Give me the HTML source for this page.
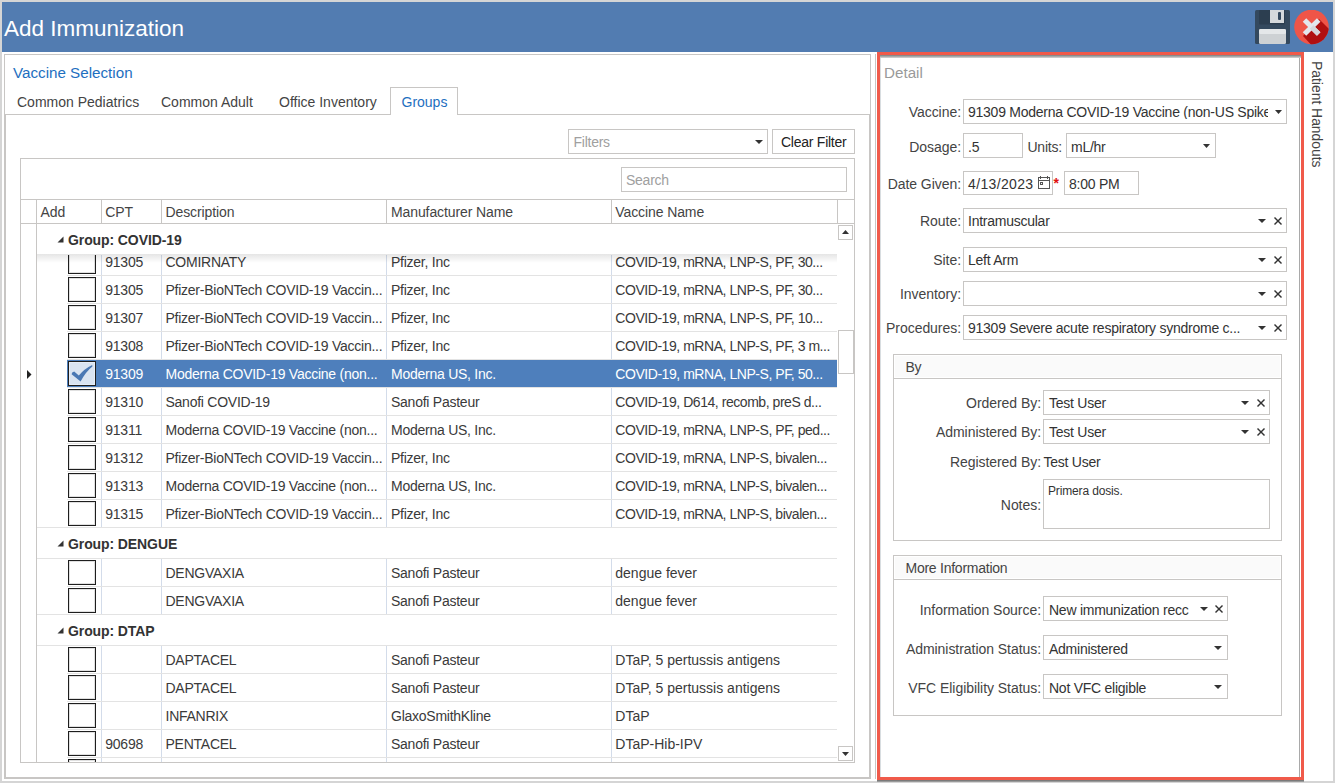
<!DOCTYPE html>
<html><head><meta charset="utf-8"><style>
html,body{margin:0;padding:0}
body{width:1335px;height:783px;position:relative;overflow:hidden;background:#fff;font-family:"Liberation Sans",sans-serif}
.t{position:absolute;white-space:nowrap;line-height:1;font-family:"Liberation Sans",sans-serif}
</style></head><body>
<div style="position:absolute;left:0px;top:0px;width:1335px;height:783px;background:#d5d5d5"></div>
<div style="position:absolute;left:2px;top:2px;width:1331px;height:779px;background:#fff"></div>
<div style="position:absolute;left:2px;top:2px;width:1331px;height:50px;background:#527cb1"></div>
<div class="t" style="left:4px;top:18.00px;font-size:22.5px;color:#fff;font-weight:400;">Add Immunization</div>
<svg style="position:absolute;left:1255px;top:10px" width="35" height="35" viewBox="0 0 35 35">
<rect x="0" y="0" width="35" height="34" rx="1.5" fill="#34495e"/>
<rect x="4" y="0" width="26" height="14.5" rx="1" fill="#2c3e50"/>
<rect x="15" y="0" width="14" height="13" fill="#d5d9dc"/>
<rect x="23" y="2" width="3" height="8" rx="1" fill="#34495e"/>
<rect x="4" y="19" width="27" height="15" rx="1.5" fill="#cdd1d4"/>
<rect x="4" y="19" width="27" height="5" rx="1.5" fill="#e4e7e9"/>
</svg>
<svg style="position:absolute;left:1294px;top:10px" width="35" height="35" viewBox="0 0 35 35">
<defs><clipPath id="cc"><circle cx="17.5" cy="17" r="17.3"/></clipPath></defs>
<circle cx="17.5" cy="17" r="17.3" fill="#ef5548"/>
<g clip-path="url(#cc)"><polygon points="25,9 40,24 40,40 22,40 9,26" fill="#b01010"/></g>
<g stroke="#e3e6ec" stroke-width="5" stroke-linecap="butt">
<line x1="10.5" y1="9.9" x2="24.7" y2="24.1"/><line x1="24.7" y1="9.9" x2="10.5" y2="24.1"/></g>
<g clip-path="url(#cc)"><line x1="17.6" y1="17" x2="24.7" y2="24.1" stroke="#d4d6da" stroke-width="5"/></g>
</svg>
<div style="position:absolute;left:4px;top:54px;width:867px;height:725px;border:1px solid #c8c6c4;box-sizing:border-box"></div>
<div class="t" style="left:13px;top:65.00px;font-size:15.2px;color:#1e6fc0;font-weight:400;">Vaccine Selection</div>
<div style="position:absolute;left:5px;top:114px;width:865px;height:664px;border:1px solid #c8c6c4;box-sizing:border-box"></div>
<div style="position:absolute;left:390px;top:87px;width:68px;height:28px;border:1px solid #c8c6c4;border-bottom:none;box-sizing:border-box;background:#fff"></div>
<div class="t" style="left:17px;top:95.00px;font-size:14px;color:#444;font-weight:400;letter-spacing:0px">Common Pediatrics</div>
<div class="t" style="left:161px;top:95.00px;font-size:14px;color:#444;font-weight:400;letter-spacing:0px">Common Adult</div>
<div class="t" style="left:279px;top:95.00px;font-size:14px;color:#444;font-weight:400;letter-spacing:0px">Office Inventory</div>
<div class="t" style="left:401.5px;top:95.00px;font-size:14px;color:#1e6fc0;font-weight:400;letter-spacing:0px">Groups</div>
<div style="position:absolute;left:568px;top:129px;width:200px;height:25px;border:1px solid #c8c6c4;box-sizing:border-box"></div>
<div class="t" style="left:573.5px;top:135.00px;font-size:14px;color:#a0a0a0;font-weight:400;letter-spacing:-0.25px;">Filters</div>
<svg style="position:absolute;left:755px;top:140px" width="8" height="4"><polygon points="0,0 8,0 4.0,4" fill="#333"/></svg>
<div style="position:absolute;left:772px;top:129px;width:83px;height:25px;border:1px solid #c8c6c4;box-sizing:border-box"></div>
<div class="t" style="left:781px;top:135.00px;font-size:14px;color:#222;font-weight:400;letter-spacing:-0.25px;">Clear Filter</div>
<div style="position:absolute;left:20px;top:158px;width:835px;height:605px;border:1px solid #c8c6c4;box-sizing:border-box"></div>
<div style="position:absolute;left:621px;top:167px;width:226px;height:25px;border:1px solid #c8c6c4;box-sizing:border-box"></div>
<div class="t" style="left:626px;top:172.50px;font-size:14px;color:#a0a0a0;font-weight:400;letter-spacing:-0.25px;">Search</div>
<div style="position:absolute;left:20px;top:199px;width:835px;height:1px;background:#c8c6c4"></div>
<div style="position:absolute;left:20px;top:223px;width:835px;height:1px;background:#c8c6c4"></div>
<div style="position:absolute;left:101px;top:199px;width:1px;height:25px;background:#c8c6c4"></div>
<div style="position:absolute;left:161px;top:199px;width:1px;height:25px;background:#c8c6c4"></div>
<div style="position:absolute;left:386px;top:199px;width:1px;height:25px;background:#c8c6c4"></div>
<div style="position:absolute;left:611px;top:199px;width:1px;height:25px;background:#c8c6c4"></div>
<div style="position:absolute;left:837px;top:199px;width:1px;height:25px;background:#c8c6c4"></div>
<div style="position:absolute;left:36px;top:199px;width:1px;height:564px;background:#c8c6c4"></div>
<div class="t" style="left:40.5px;top:205.00px;font-size:14px;color:#444;font-weight:400;letter-spacing:-0.1px">Add</div>
<div class="t" style="left:105.3px;top:205.00px;font-size:14px;color:#444;font-weight:400;letter-spacing:-0.1px">CPT</div>
<div class="t" style="left:165.5px;top:205.00px;font-size:14px;color:#444;font-weight:400;letter-spacing:-0.1px">Description</div>
<div class="t" style="left:391px;top:205.00px;font-size:14px;color:#444;font-weight:400;letter-spacing:-0.1px">Manufacturer Name</div>
<div class="t" style="left:615.3px;top:205.00px;font-size:14px;color:#444;font-weight:400;letter-spacing:-0.1px">Vaccine Name</div>
<div style="position:absolute;left:37px;top:224px;width:800px;height:538px;overflow:hidden">
<div style="position:absolute;left:-37px;top:-224px;width:1335px;height:783px">
<div style="position:absolute;left:101px;top:248px;width:1px;height:27px;background:#d3dcea"></div>
<div style="position:absolute;left:161px;top:248px;width:1px;height:27px;background:#d3dcea"></div>
<div style="position:absolute;left:386px;top:248px;width:1px;height:27px;background:#d3dcea"></div>
<div style="position:absolute;left:611px;top:248px;width:1px;height:27px;background:#d3dcea"></div>
<div style="position:absolute;left:67px;top:275px;width:771px;height:1px;background:#e3e3e3"></div>
<div style="position:absolute;left:68px;top:249px;width:28px;height:25px;border:1px solid #1e1e1e;box-shadow:inset 0 0 0 1px rgba(0,0,0,0.12);box-sizing:border-box;background:#fff"></div>
<div class="t" style="left:105.3px;top:255.00px;font-size:14px;color:#3a3a3a;font-weight:400;letter-spacing:-0.25px;">91305</div>
<div class="t" style="left:165.5px;top:255.00px;font-size:14px;color:#3a3a3a;font-weight:400;letter-spacing:-0.25px;">COMIRNATY</div>
<div class="t" style="left:391px;top:255.00px;font-size:14px;color:#3a3a3a;font-weight:400;letter-spacing:-0.25px;">Pfizer, Inc</div>
<div class="t" style="left:615.3px;top:255.00px;font-size:14px;color:#3a3a3a;font-weight:400;letter-spacing:-0.45px">COVID-19, mRNA, LNP-S, PF, 30...</div>
<div style="position:absolute;left:101px;top:276px;width:1px;height:27px;background:#d3dcea"></div>
<div style="position:absolute;left:161px;top:276px;width:1px;height:27px;background:#d3dcea"></div>
<div style="position:absolute;left:386px;top:276px;width:1px;height:27px;background:#d3dcea"></div>
<div style="position:absolute;left:611px;top:276px;width:1px;height:27px;background:#d3dcea"></div>
<div style="position:absolute;left:67px;top:303px;width:771px;height:1px;background:#e3e3e3"></div>
<div style="position:absolute;left:68px;top:277px;width:28px;height:25px;border:1px solid #1e1e1e;box-shadow:inset 0 0 0 1px rgba(0,0,0,0.12);box-sizing:border-box;background:#fff"></div>
<div class="t" style="left:105.3px;top:283.00px;font-size:14px;color:#3a3a3a;font-weight:400;letter-spacing:-0.25px;">91305</div>
<div class="t" style="left:165.5px;top:283.00px;font-size:14px;color:#3a3a3a;font-weight:400;letter-spacing:-0.25px;">Pfizer-BioNTech COVID-19 Vaccin...</div>
<div class="t" style="left:391px;top:283.00px;font-size:14px;color:#3a3a3a;font-weight:400;letter-spacing:-0.25px;">Pfizer, Inc</div>
<div class="t" style="left:615.3px;top:283.00px;font-size:14px;color:#3a3a3a;font-weight:400;letter-spacing:-0.45px">COVID-19, mRNA, LNP-S, PF, 30...</div>
<div style="position:absolute;left:101px;top:304px;width:1px;height:27px;background:#d3dcea"></div>
<div style="position:absolute;left:161px;top:304px;width:1px;height:27px;background:#d3dcea"></div>
<div style="position:absolute;left:386px;top:304px;width:1px;height:27px;background:#d3dcea"></div>
<div style="position:absolute;left:611px;top:304px;width:1px;height:27px;background:#d3dcea"></div>
<div style="position:absolute;left:67px;top:331px;width:771px;height:1px;background:#e3e3e3"></div>
<div style="position:absolute;left:68px;top:305px;width:28px;height:25px;border:1px solid #1e1e1e;box-shadow:inset 0 0 0 1px rgba(0,0,0,0.12);box-sizing:border-box;background:#fff"></div>
<div class="t" style="left:105.3px;top:311.00px;font-size:14px;color:#3a3a3a;font-weight:400;letter-spacing:-0.25px;">91307</div>
<div class="t" style="left:165.5px;top:311.00px;font-size:14px;color:#3a3a3a;font-weight:400;letter-spacing:-0.25px;">Pfizer-BioNTech COVID-19 Vaccin...</div>
<div class="t" style="left:391px;top:311.00px;font-size:14px;color:#3a3a3a;font-weight:400;letter-spacing:-0.25px;">Pfizer, Inc</div>
<div class="t" style="left:615.3px;top:311.00px;font-size:14px;color:#3a3a3a;font-weight:400;letter-spacing:-0.45px">COVID-19, mRNA, LNP-S, PF, 10...</div>
<div style="position:absolute;left:101px;top:332px;width:1px;height:27px;background:#d3dcea"></div>
<div style="position:absolute;left:161px;top:332px;width:1px;height:27px;background:#d3dcea"></div>
<div style="position:absolute;left:386px;top:332px;width:1px;height:27px;background:#d3dcea"></div>
<div style="position:absolute;left:611px;top:332px;width:1px;height:27px;background:#d3dcea"></div>
<div style="position:absolute;left:67px;top:359px;width:771px;height:1px;background:#e3e3e3"></div>
<div style="position:absolute;left:68px;top:333px;width:28px;height:25px;border:1px solid #1e1e1e;box-shadow:inset 0 0 0 1px rgba(0,0,0,0.12);box-sizing:border-box;background:#fff"></div>
<div class="t" style="left:105.3px;top:339.00px;font-size:14px;color:#3a3a3a;font-weight:400;letter-spacing:-0.25px;">91308</div>
<div class="t" style="left:165.5px;top:339.00px;font-size:14px;color:#3a3a3a;font-weight:400;letter-spacing:-0.25px;">Pfizer-BioNTech COVID-19 Vaccin...</div>
<div class="t" style="left:391px;top:339.00px;font-size:14px;color:#3a3a3a;font-weight:400;letter-spacing:-0.25px;">Pfizer, Inc</div>
<div class="t" style="left:615.3px;top:339.00px;font-size:14px;color:#3a3a3a;font-weight:400;letter-spacing:-0.45px">COVID-19, mRNA, LNP-S, PF, 3 m...</div>
<div style="position:absolute;left:67px;top:360px;width:770px;height:27px;background:#4e7fbc"></div>
<div style="position:absolute;left:101px;top:360px;width:1px;height:27px;background:#4e7fbc"></div>
<div style="position:absolute;left:161px;top:360px;width:1px;height:27px;background:#4e7fbc"></div>
<div style="position:absolute;left:386px;top:360px;width:1px;height:27px;background:#4e7fbc"></div>
<div style="position:absolute;left:611px;top:360px;width:1px;height:27px;background:#4e7fbc"></div>
<div style="position:absolute;left:67px;top:387px;width:771px;height:1px;background:#e3e3e3"></div>
<div style="position:absolute;left:68px;top:361px;width:28px;height:25px;border:1px solid #1e1e1e;box-shadow:inset 0 0 0 1px #e6edf7;box-sizing:border-box;background:#dae4f1"></div>
<svg style="position:absolute;left:60px;top:355px" width="40" height="30"><path d="M12.2,17.6 L14.2,16.4 L18.8,20.6 Q24,14 32.2,10 L32.4,11.6 Q26,16.5 20.6,26.6 L11.6,19.2 Z" fill="#4a78b4"/></svg>
<div class="t" style="left:105.3px;top:367.00px;font-size:14px;color:#fff;font-weight:400;letter-spacing:-0.25px;">91309</div>
<div class="t" style="left:165.5px;top:367.00px;font-size:14px;color:#fff;font-weight:400;letter-spacing:-0.25px;">Moderna COVID-19 Vaccine (non...</div>
<div class="t" style="left:391px;top:367.00px;font-size:14px;color:#fff;font-weight:400;letter-spacing:-0.25px;">Moderna US, Inc.</div>
<div class="t" style="left:615.3px;top:367.00px;font-size:14px;color:#fff;font-weight:400;letter-spacing:-0.45px">COVID-19, mRNA, LNP-S, PF, 50...</div>
<div style="position:absolute;left:101px;top:388px;width:1px;height:27px;background:#d3dcea"></div>
<div style="position:absolute;left:161px;top:388px;width:1px;height:27px;background:#d3dcea"></div>
<div style="position:absolute;left:386px;top:388px;width:1px;height:27px;background:#d3dcea"></div>
<div style="position:absolute;left:611px;top:388px;width:1px;height:27px;background:#d3dcea"></div>
<div style="position:absolute;left:67px;top:415px;width:771px;height:1px;background:#e3e3e3"></div>
<div style="position:absolute;left:68px;top:389px;width:28px;height:25px;border:1px solid #1e1e1e;box-shadow:inset 0 0 0 1px rgba(0,0,0,0.12);box-sizing:border-box;background:#fff"></div>
<div class="t" style="left:105.3px;top:395.00px;font-size:14px;color:#3a3a3a;font-weight:400;letter-spacing:-0.25px;">91310</div>
<div class="t" style="left:165.5px;top:395.00px;font-size:14px;color:#3a3a3a;font-weight:400;letter-spacing:-0.25px;">Sanofi COVID-19</div>
<div class="t" style="left:391px;top:395.00px;font-size:14px;color:#3a3a3a;font-weight:400;letter-spacing:-0.25px;">Sanofi Pasteur</div>
<div class="t" style="left:615.3px;top:395.00px;font-size:14px;color:#3a3a3a;font-weight:400;letter-spacing:-0.45px">COVID-19, D614, recomb, preS d...</div>
<div style="position:absolute;left:101px;top:416px;width:1px;height:27px;background:#d3dcea"></div>
<div style="position:absolute;left:161px;top:416px;width:1px;height:27px;background:#d3dcea"></div>
<div style="position:absolute;left:386px;top:416px;width:1px;height:27px;background:#d3dcea"></div>
<div style="position:absolute;left:611px;top:416px;width:1px;height:27px;background:#d3dcea"></div>
<div style="position:absolute;left:67px;top:443px;width:771px;height:1px;background:#e3e3e3"></div>
<div style="position:absolute;left:68px;top:417px;width:28px;height:25px;border:1px solid #1e1e1e;box-shadow:inset 0 0 0 1px rgba(0,0,0,0.12);box-sizing:border-box;background:#fff"></div>
<div class="t" style="left:105.3px;top:423.00px;font-size:14px;color:#3a3a3a;font-weight:400;letter-spacing:-0.25px;">91311</div>
<div class="t" style="left:165.5px;top:423.00px;font-size:14px;color:#3a3a3a;font-weight:400;letter-spacing:-0.25px;">Moderna COVID-19 Vaccine (non...</div>
<div class="t" style="left:391px;top:423.00px;font-size:14px;color:#3a3a3a;font-weight:400;letter-spacing:-0.25px;">Moderna US, Inc.</div>
<div class="t" style="left:615.3px;top:423.00px;font-size:14px;color:#3a3a3a;font-weight:400;letter-spacing:-0.45px">COVID-19, mRNA, LNP-S, PF, ped...</div>
<div style="position:absolute;left:101px;top:444px;width:1px;height:27px;background:#d3dcea"></div>
<div style="position:absolute;left:161px;top:444px;width:1px;height:27px;background:#d3dcea"></div>
<div style="position:absolute;left:386px;top:444px;width:1px;height:27px;background:#d3dcea"></div>
<div style="position:absolute;left:611px;top:444px;width:1px;height:27px;background:#d3dcea"></div>
<div style="position:absolute;left:67px;top:471px;width:771px;height:1px;background:#e3e3e3"></div>
<div style="position:absolute;left:68px;top:445px;width:28px;height:25px;border:1px solid #1e1e1e;box-shadow:inset 0 0 0 1px rgba(0,0,0,0.12);box-sizing:border-box;background:#fff"></div>
<div class="t" style="left:105.3px;top:451.00px;font-size:14px;color:#3a3a3a;font-weight:400;letter-spacing:-0.25px;">91312</div>
<div class="t" style="left:165.5px;top:451.00px;font-size:14px;color:#3a3a3a;font-weight:400;letter-spacing:-0.25px;">Pfizer-BioNTech COVID-19 Vaccin...</div>
<div class="t" style="left:391px;top:451.00px;font-size:14px;color:#3a3a3a;font-weight:400;letter-spacing:-0.25px;">Pfizer, Inc</div>
<div class="t" style="left:615.3px;top:451.00px;font-size:14px;color:#3a3a3a;font-weight:400;letter-spacing:-0.45px">COVID-19, mRNA, LNP-S, bivalen...</div>
<div style="position:absolute;left:101px;top:472px;width:1px;height:27px;background:#d3dcea"></div>
<div style="position:absolute;left:161px;top:472px;width:1px;height:27px;background:#d3dcea"></div>
<div style="position:absolute;left:386px;top:472px;width:1px;height:27px;background:#d3dcea"></div>
<div style="position:absolute;left:611px;top:472px;width:1px;height:27px;background:#d3dcea"></div>
<div style="position:absolute;left:67px;top:499px;width:771px;height:1px;background:#e3e3e3"></div>
<div style="position:absolute;left:68px;top:473px;width:28px;height:25px;border:1px solid #1e1e1e;box-shadow:inset 0 0 0 1px rgba(0,0,0,0.12);box-sizing:border-box;background:#fff"></div>
<div class="t" style="left:105.3px;top:479.00px;font-size:14px;color:#3a3a3a;font-weight:400;letter-spacing:-0.25px;">91313</div>
<div class="t" style="left:165.5px;top:479.00px;font-size:14px;color:#3a3a3a;font-weight:400;letter-spacing:-0.25px;">Moderna COVID-19 Vaccine (non...</div>
<div class="t" style="left:391px;top:479.00px;font-size:14px;color:#3a3a3a;font-weight:400;letter-spacing:-0.25px;">Moderna US, Inc.</div>
<div class="t" style="left:615.3px;top:479.00px;font-size:14px;color:#3a3a3a;font-weight:400;letter-spacing:-0.45px">COVID-19, mRNA, LNP-S, bivalen...</div>
<div style="position:absolute;left:101px;top:500px;width:1px;height:27px;background:#d3dcea"></div>
<div style="position:absolute;left:161px;top:500px;width:1px;height:27px;background:#d3dcea"></div>
<div style="position:absolute;left:386px;top:500px;width:1px;height:27px;background:#d3dcea"></div>
<div style="position:absolute;left:611px;top:500px;width:1px;height:27px;background:#d3dcea"></div>
<div style="position:absolute;left:37px;top:527px;width:801px;height:1px;background:#e3e3e3"></div>
<div style="position:absolute;left:68px;top:501px;width:28px;height:25px;border:1px solid #1e1e1e;box-shadow:inset 0 0 0 1px rgba(0,0,0,0.12);box-sizing:border-box;background:#fff"></div>
<div class="t" style="left:105.3px;top:507.00px;font-size:14px;color:#3a3a3a;font-weight:400;letter-spacing:-0.25px;">91315</div>
<div class="t" style="left:165.5px;top:507.00px;font-size:14px;color:#3a3a3a;font-weight:400;letter-spacing:-0.25px;">Pfizer-BioNTech COVID-19 Vaccin...</div>
<div class="t" style="left:391px;top:507.00px;font-size:14px;color:#3a3a3a;font-weight:400;letter-spacing:-0.25px;">Pfizer, Inc</div>
<div class="t" style="left:615.3px;top:507.00px;font-size:14px;color:#3a3a3a;font-weight:400;letter-spacing:-0.45px">COVID-19, mRNA, LNP-S, bivalen...</div>
<div style="position:absolute;left:37px;top:528px;width:800px;height:30px;background:#fff"></div>
<svg style="position:absolute;left:57px;top:540px" width="7" height="7"><polygon points="6.5,0.5 6.5,6.5 0.5,6.5" fill="#333"/></svg>
<div class="t" style="left:68px;top:536.50px;font-size:14px;color:#333;font-weight:700;letter-spacing:-0.1px">Group: DENGUE</div>
<div style="position:absolute;left:37px;top:558px;width:801px;height:1px;background:#e3e3e3"></div>
<div style="position:absolute;left:101px;top:559px;width:1px;height:27px;background:#d3dcea"></div>
<div style="position:absolute;left:161px;top:559px;width:1px;height:27px;background:#d3dcea"></div>
<div style="position:absolute;left:386px;top:559px;width:1px;height:27px;background:#d3dcea"></div>
<div style="position:absolute;left:611px;top:559px;width:1px;height:27px;background:#d3dcea"></div>
<div style="position:absolute;left:67px;top:586px;width:771px;height:1px;background:#e3e3e3"></div>
<div style="position:absolute;left:68px;top:560px;width:28px;height:25px;border:1px solid #1e1e1e;box-shadow:inset 0 0 0 1px rgba(0,0,0,0.12);box-sizing:border-box;background:#fff"></div>
<div class="t" style="left:165.5px;top:566.00px;font-size:14px;color:#3a3a3a;font-weight:400;letter-spacing:-0.25px;">DENGVAXIA</div>
<div class="t" style="left:391px;top:566.00px;font-size:14px;color:#3a3a3a;font-weight:400;letter-spacing:-0.25px;">Sanofi Pasteur</div>
<div class="t" style="left:615.3px;top:566.00px;font-size:14px;color:#3a3a3a;font-weight:400;letter-spacing:0px">dengue fever</div>
<div style="position:absolute;left:101px;top:587px;width:1px;height:27px;background:#d3dcea"></div>
<div style="position:absolute;left:161px;top:587px;width:1px;height:27px;background:#d3dcea"></div>
<div style="position:absolute;left:386px;top:587px;width:1px;height:27px;background:#d3dcea"></div>
<div style="position:absolute;left:611px;top:587px;width:1px;height:27px;background:#d3dcea"></div>
<div style="position:absolute;left:37px;top:614px;width:801px;height:1px;background:#e3e3e3"></div>
<div style="position:absolute;left:68px;top:588px;width:28px;height:25px;border:1px solid #1e1e1e;box-shadow:inset 0 0 0 1px rgba(0,0,0,0.12);box-sizing:border-box;background:#fff"></div>
<div class="t" style="left:165.5px;top:594.00px;font-size:14px;color:#3a3a3a;font-weight:400;letter-spacing:-0.25px;">DENGVAXIA</div>
<div class="t" style="left:391px;top:594.00px;font-size:14px;color:#3a3a3a;font-weight:400;letter-spacing:-0.25px;">Sanofi Pasteur</div>
<div class="t" style="left:615.3px;top:594.00px;font-size:14px;color:#3a3a3a;font-weight:400;letter-spacing:0px">dengue fever</div>
<div style="position:absolute;left:37px;top:615px;width:800px;height:30px;background:#fff"></div>
<svg style="position:absolute;left:57px;top:627px" width="7" height="7"><polygon points="6.5,0.5 6.5,6.5 0.5,6.5" fill="#333"/></svg>
<div class="t" style="left:68px;top:623.50px;font-size:14px;color:#333;font-weight:700;letter-spacing:-0.1px">Group: DTAP</div>
<div style="position:absolute;left:37px;top:645px;width:801px;height:1px;background:#e3e3e3"></div>
<div style="position:absolute;left:101px;top:646px;width:1px;height:27px;background:#d3dcea"></div>
<div style="position:absolute;left:161px;top:646px;width:1px;height:27px;background:#d3dcea"></div>
<div style="position:absolute;left:386px;top:646px;width:1px;height:27px;background:#d3dcea"></div>
<div style="position:absolute;left:611px;top:646px;width:1px;height:27px;background:#d3dcea"></div>
<div style="position:absolute;left:67px;top:673px;width:771px;height:1px;background:#e3e3e3"></div>
<div style="position:absolute;left:68px;top:647px;width:28px;height:25px;border:1px solid #1e1e1e;box-shadow:inset 0 0 0 1px rgba(0,0,0,0.12);box-sizing:border-box;background:#fff"></div>
<div class="t" style="left:165.5px;top:653.00px;font-size:14px;color:#3a3a3a;font-weight:400;letter-spacing:-0.25px;">DAPTACEL</div>
<div class="t" style="left:391px;top:653.00px;font-size:14px;color:#3a3a3a;font-weight:400;letter-spacing:-0.25px;">Sanofi Pasteur</div>
<div class="t" style="left:615.3px;top:653.00px;font-size:14px;color:#3a3a3a;font-weight:400;letter-spacing:0px">DTaP, 5 pertussis antigens</div>
<div style="position:absolute;left:101px;top:674px;width:1px;height:27px;background:#d3dcea"></div>
<div style="position:absolute;left:161px;top:674px;width:1px;height:27px;background:#d3dcea"></div>
<div style="position:absolute;left:386px;top:674px;width:1px;height:27px;background:#d3dcea"></div>
<div style="position:absolute;left:611px;top:674px;width:1px;height:27px;background:#d3dcea"></div>
<div style="position:absolute;left:67px;top:701px;width:771px;height:1px;background:#e3e3e3"></div>
<div style="position:absolute;left:68px;top:675px;width:28px;height:25px;border:1px solid #1e1e1e;box-shadow:inset 0 0 0 1px rgba(0,0,0,0.12);box-sizing:border-box;background:#fff"></div>
<div class="t" style="left:165.5px;top:681.00px;font-size:14px;color:#3a3a3a;font-weight:400;letter-spacing:-0.25px;">DAPTACEL</div>
<div class="t" style="left:391px;top:681.00px;font-size:14px;color:#3a3a3a;font-weight:400;letter-spacing:-0.25px;">Sanofi Pasteur</div>
<div class="t" style="left:615.3px;top:681.00px;font-size:14px;color:#3a3a3a;font-weight:400;letter-spacing:0px">DTaP, 5 pertussis antigens</div>
<div style="position:absolute;left:101px;top:702px;width:1px;height:27px;background:#d3dcea"></div>
<div style="position:absolute;left:161px;top:702px;width:1px;height:27px;background:#d3dcea"></div>
<div style="position:absolute;left:386px;top:702px;width:1px;height:27px;background:#d3dcea"></div>
<div style="position:absolute;left:611px;top:702px;width:1px;height:27px;background:#d3dcea"></div>
<div style="position:absolute;left:67px;top:729px;width:771px;height:1px;background:#e3e3e3"></div>
<div style="position:absolute;left:68px;top:703px;width:28px;height:25px;border:1px solid #1e1e1e;box-shadow:inset 0 0 0 1px rgba(0,0,0,0.12);box-sizing:border-box;background:#fff"></div>
<div class="t" style="left:165.5px;top:709.00px;font-size:14px;color:#3a3a3a;font-weight:400;letter-spacing:-0.25px;">INFANRIX</div>
<div class="t" style="left:391px;top:709.00px;font-size:14px;color:#3a3a3a;font-weight:400;letter-spacing:-0.25px;">GlaxoSmithKline</div>
<div class="t" style="left:615.3px;top:709.00px;font-size:14px;color:#3a3a3a;font-weight:400;letter-spacing:0px">DTaP</div>
<div style="position:absolute;left:101px;top:730px;width:1px;height:27px;background:#d3dcea"></div>
<div style="position:absolute;left:161px;top:730px;width:1px;height:27px;background:#d3dcea"></div>
<div style="position:absolute;left:386px;top:730px;width:1px;height:27px;background:#d3dcea"></div>
<div style="position:absolute;left:611px;top:730px;width:1px;height:27px;background:#d3dcea"></div>
<div style="position:absolute;left:67px;top:757px;width:771px;height:1px;background:#e3e3e3"></div>
<div style="position:absolute;left:68px;top:731px;width:28px;height:25px;border:1px solid #1e1e1e;box-shadow:inset 0 0 0 1px rgba(0,0,0,0.12);box-sizing:border-box;background:#fff"></div>
<div class="t" style="left:105.3px;top:737.00px;font-size:14px;color:#3a3a3a;font-weight:400;letter-spacing:-0.25px;">90698</div>
<div class="t" style="left:165.5px;top:737.00px;font-size:14px;color:#3a3a3a;font-weight:400;letter-spacing:-0.25px;">PENTACEL</div>
<div class="t" style="left:391px;top:737.00px;font-size:14px;color:#3a3a3a;font-weight:400;letter-spacing:-0.25px;">Sanofi Pasteur</div>
<div class="t" style="left:615.3px;top:737.00px;font-size:14px;color:#3a3a3a;font-weight:400;letter-spacing:0px">DTaP-Hib-IPV</div>
<div style="position:absolute;left:101px;top:758px;width:1px;height:27px;background:#d3dcea"></div>
<div style="position:absolute;left:161px;top:758px;width:1px;height:27px;background:#d3dcea"></div>
<div style="position:absolute;left:386px;top:758px;width:1px;height:27px;background:#d3dcea"></div>
<div style="position:absolute;left:611px;top:758px;width:1px;height:27px;background:#d3dcea"></div>
<div style="position:absolute;left:67px;top:785px;width:771px;height:1px;background:#e3e3e3"></div>
<div style="position:absolute;left:68px;top:759px;width:28px;height:25px;border:1px solid #1e1e1e;box-shadow:inset 0 0 0 1px rgba(0,0,0,0.12);box-sizing:border-box;background:#fff"></div>
<div class="t" style="left:165.5px;top:765.00px;font-size:14px;color:#3a3a3a;font-weight:400;letter-spacing:-0.25px;"></div>
<div class="t" style="left:391px;top:765.00px;font-size:14px;color:#3a3a3a;font-weight:400;letter-spacing:-0.25px;"></div>
<div class="t" style="left:615.3px;top:765.00px;font-size:14px;color:#3a3a3a;font-weight:400;letter-spacing:0px"></div>
<div style="position:absolute;left:37px;top:224px;width:800px;height:31px;background:#fff"></div>
<svg style="position:absolute;left:57px;top:236px" width="7" height="7"><polygon points="6.5,0.5 6.5,6.5 0.5,6.5" fill="#333"/></svg>
<div class="t" style="left:68px;top:232.50px;font-size:14px;color:#333;font-weight:700;letter-spacing:-0.1px">Group: COVID-19</div>
<div style="position:absolute;left:37px;top:254px;width:800px;height:9px;background:linear-gradient(rgba(0,0,0,0.10),rgba(0,0,0,0))"></div>
</div></div>
<svg style="position:absolute;left:27px;top:370px" width="5" height="9"><polygon points="0,0 4.5,4.5 0,9" fill="#222"/></svg>
<div style="position:absolute;left:838px;top:225px;width:15px;height:15px;border:1px solid #c8c6c4;box-sizing:border-box;background:#fff"></div>
<svg style="position:absolute;left:842px;top:230px" width="7" height="4"><polygon points="0,4 7,4 3.5,0" fill="#333"/></svg>
<div style="position:absolute;left:838px;top:330px;width:16px;height:44px;border:1px solid #c8c6c4;box-sizing:border-box;background:#fff"></div>
<div style="position:absolute;left:838px;top:746px;width:15px;height:15px;border:1px solid #c8c6c4;box-sizing:border-box;background:#fff"></div>
<svg style="position:absolute;left:842px;top:752px" width="7" height="4"><polygon points="0,0 7,0 3.5,4" fill="#333"/></svg>
<div style="position:absolute;left:875px;top:54px;width:1px;height:725px;background:#c8c6c4"></div>
<div style="position:absolute;left:877px;top:52px;width:427px;height:728px;border:3px solid #f05a4a;box-sizing:border-box"></div>
<div style="position:absolute;left:880px;top:55px;width:421px;height:3px;background:linear-gradient(#7a7a7a,#d8d8d8)"></div>
<div style="position:absolute;left:880px;top:58px;width:1px;height:719px;background:#d8dde0"></div>
<div style="position:absolute;left:1299px;top:58px;width:1px;height:719px;background:#a9a9a9"></div>
<div style="position:absolute;left:877px;top:780px;width:427px;height:1px;background:#7a7a7a"></div>
<div style="position:absolute;left:877px;top:781px;width:427px;height:1px;background:#9a9a9a"></div>
<div class="t" style="left:884px;top:64.50px;font-size:15.2px;color:#9a9a9a;font-weight:400;">Detail</div>
<div class="t" style="left:1312px;top:61px;font-size:13.9px;color:#444;transform-origin:0 0;transform:translate(11px,0) rotate(90deg);">Patient Handouts</div>
<div class="t" style="right:374px;top:105.00px;font-size:14px;color:#444;font-weight:400;letter-spacing:-0.05px">Vaccine:</div>
<div style="position:absolute;left:963px;top:99px;width:324px;height:25px;border:1px solid #c8c6c4;box-sizing:border-box;background:#fff"></div>
<div class="t" style="left:968px;width:300px;overflow:hidden;top:105.00px;font-size:14px;color:#333;font-weight:400;letter-spacing:-0.25px;">91309 Moderna COVID-19 Vaccine (non-US Spike</div>
<svg style="position:absolute;left:1275px;top:110px" width="7" height="4"><polygon points="0,0 7,0 3.5,4" fill="#333"/></svg>
<div class="t" style="right:374px;top:139.50px;font-size:14px;color:#444;font-weight:400;letter-spacing:-0.05px">Dosage:</div>
<div style="position:absolute;left:963px;top:133px;width:60px;height:25px;border:1px solid #c8c6c4;box-sizing:border-box;background:#fff"></div>
<div class="t" style="left:968px;top:139.50px;font-size:14px;color:#333;font-weight:400;letter-spacing:-0.25px;">.5</div>
<div class="t" style="left:1027.5px;top:139.50px;font-size:14px;color:#444;font-weight:400;letter-spacing:-0.25px;">Units:</div>
<div style="position:absolute;left:1066px;top:133px;width:150px;height:25px;border:1px solid #c8c6c4;box-sizing:border-box;background:#fff"></div>
<div class="t" style="left:1071px;top:139.50px;font-size:14px;color:#333;font-weight:400;letter-spacing:-0.25px;">mL/hr</div>
<svg style="position:absolute;left:1203px;top:144px" width="7" height="4"><polygon points="0,0 7,0 3.5,4" fill="#333"/></svg>
<div class="t" style="right:374px;top:177.00px;font-size:14px;color:#444;font-weight:400;letter-spacing:-0.05px">Date Given:</div>
<div style="position:absolute;left:963px;top:171px;width:90px;height:24px;border:1px solid #c8c6c4;box-sizing:border-box;background:#fff"></div>
<div class="t" style="left:968px;top:177.00px;font-size:14px;color:#333;font-weight:400;letter-spacing:0.35px">4/13/2023</div>
<svg style="position:absolute;left:1038px;top:176px" width="13" height="14" viewBox="0 0 13 14">
<rect x="0.5" y="1.5" width="11" height="11" fill="none" stroke="#555" stroke-width="1"/>
<line x1="2.5" y1="0" x2="2.5" y2="3" stroke="#555"/><line x1="9.5" y1="0" x2="9.5" y2="3" stroke="#555"/>
<line x1="0.5" y1="4.5" x2="11.5" y2="4.5" stroke="#555"/>
<rect x="2.5" y="6.5" width="2" height="2" fill="none" stroke="#555" stroke-width="1"/>
</svg>
<div class="t" style="left:1053.5px;top:176.00px;font-size:14px;color:#e01010;font-weight:700;letter-spacing:-0.25px;">*</div>
<div style="position:absolute;left:1064px;top:171px;width:75px;height:24px;border:1px solid #c8c6c4;box-sizing:border-box;background:#fff"></div>
<div class="t" style="left:1069px;top:177.00px;font-size:14px;color:#333;font-weight:400;letter-spacing:-0.25px;">8:00 PM</div>
<div class="t" style="right:374px;top:214.00px;font-size:14px;color:#444;font-weight:400;letter-spacing:-0.05px">Route:</div>
<div style="position:absolute;left:963px;top:208px;width:324px;height:25px;border:1px solid #c8c6c4;box-sizing:border-box;background:#fff"></div>
<div class="t" style="left:968px;top:214.00px;font-size:14px;color:#333;font-weight:400;letter-spacing:-0.25px;">Intramuscular</div>
<svg style="position:absolute;left:1258px;top:219px" width="8" height="4"><polygon points="0,0 8,0 4.0,4" fill="#333"/></svg>
<svg style="position:absolute;left:1274px;top:217px" width="8" height="8"><g stroke="#333" stroke-width="1.4"><line x1="0.5" y1="0.5" x2="7.5" y2="7.5"/><line x1="7.5" y1="0.5" x2="0.5" y2="7.5"/></g></svg>
<div class="t" style="right:374px;top:253.00px;font-size:14px;color:#444;font-weight:400;letter-spacing:-0.05px">Site:</div>
<div style="position:absolute;left:963px;top:247px;width:324px;height:25px;border:1px solid #c8c6c4;box-sizing:border-box;background:#fff"></div>
<div class="t" style="left:968px;top:253.00px;font-size:14px;color:#333;font-weight:400;letter-spacing:-0.25px;">Left Arm</div>
<svg style="position:absolute;left:1258px;top:258px" width="8" height="4"><polygon points="0,0 8,0 4.0,4" fill="#333"/></svg>
<svg style="position:absolute;left:1274px;top:256px" width="8" height="8"><g stroke="#333" stroke-width="1.4"><line x1="0.5" y1="0.5" x2="7.5" y2="7.5"/><line x1="7.5" y1="0.5" x2="0.5" y2="7.5"/></g></svg>
<div class="t" style="right:374px;top:287.00px;font-size:14px;color:#444;font-weight:400;letter-spacing:-0.05px">Inventory:</div>
<div style="position:absolute;left:963px;top:281px;width:324px;height:25px;border:1px solid #c8c6c4;box-sizing:border-box;background:#fff"></div>
<svg style="position:absolute;left:1258px;top:292px" width="8" height="4"><polygon points="0,0 8,0 4.0,4" fill="#333"/></svg>
<svg style="position:absolute;left:1274px;top:290px" width="8" height="8"><g stroke="#333" stroke-width="1.4"><line x1="0.5" y1="0.5" x2="7.5" y2="7.5"/><line x1="7.5" y1="0.5" x2="0.5" y2="7.5"/></g></svg>
<div class="t" style="right:374px;top:321.00px;font-size:14px;color:#444;font-weight:400;letter-spacing:-0.05px">Procedures:</div>
<div style="position:absolute;left:963px;top:315px;width:324px;height:25px;border:1px solid #c8c6c4;box-sizing:border-box;background:#fff"></div>
<div class="t" style="left:968px;top:321.00px;font-size:14px;color:#333;font-weight:400;letter-spacing:-0.25px;">91309 Severe acute respiratory syndrome c...</div>
<svg style="position:absolute;left:1258px;top:326px" width="8" height="4"><polygon points="0,0 8,0 4.0,4" fill="#333"/></svg>
<svg style="position:absolute;left:1274px;top:324px" width="8" height="8"><g stroke="#333" stroke-width="1.4"><line x1="0.5" y1="0.5" x2="7.5" y2="7.5"/><line x1="7.5" y1="0.5" x2="0.5" y2="7.5"/></g></svg>
<div style="position:absolute;left:893px;top:354px;width:389px;height:187px;border:1px solid #c8c6c4;box-sizing:border-box;background:#fff"></div>
<div style="position:absolute;left:894px;top:355px;width:387px;height:23px;background:#fafafa;box-shadow:inset 0 0 0 1px #fff"></div>
<div style="position:absolute;left:894px;top:378px;width:387px;height:1px;background:#c8c6c4"></div>
<div class="t" style="left:905.5px;top:360.00px;font-size:14px;color:#444;font-weight:400;letter-spacing:-0.25px;">By</div>
<div class="t" style="right:294px;top:396.00px;font-size:14px;color:#444;font-weight:400;letter-spacing:-0.05px">Ordered By:</div>
<div style="position:absolute;left:1043px;top:390px;width:227px;height:25px;border:1px solid #c8c6c4;box-sizing:border-box;background:#fff"></div>
<div class="t" style="left:1049px;top:396.00px;font-size:14px;color:#333;font-weight:400;letter-spacing:-0.25px;">Test User</div>
<svg style="position:absolute;left:1241px;top:401px" width="8" height="4"><polygon points="0,0 8,0 4.0,4" fill="#333"/></svg>
<svg style="position:absolute;left:1257px;top:399px" width="8" height="8"><g stroke="#333" stroke-width="1.4"><line x1="0.5" y1="0.5" x2="7.5" y2="7.5"/><line x1="7.5" y1="0.5" x2="0.5" y2="7.5"/></g></svg>
<div class="t" style="right:294px;top:425.00px;font-size:14px;color:#444;font-weight:400;letter-spacing:-0.05px">Administered By:</div>
<div style="position:absolute;left:1043px;top:419px;width:227px;height:25px;border:1px solid #c8c6c4;box-sizing:border-box;background:#fff"></div>
<div class="t" style="left:1049px;top:425.00px;font-size:14px;color:#333;font-weight:400;letter-spacing:-0.25px;">Test User</div>
<svg style="position:absolute;left:1241px;top:430px" width="8" height="4"><polygon points="0,0 8,0 4.0,4" fill="#333"/></svg>
<svg style="position:absolute;left:1257px;top:428px" width="8" height="8"><g stroke="#333" stroke-width="1.4"><line x1="0.5" y1="0.5" x2="7.5" y2="7.5"/><line x1="7.5" y1="0.5" x2="0.5" y2="7.5"/></g></svg>
<div class="t" style="right:294px;top:455.00px;font-size:14px;color:#444;font-weight:400;letter-spacing:-0.05px">Registered By:</div>
<div class="t" style="left:1043.5px;top:455.00px;font-size:14px;color:#333;font-weight:400;letter-spacing:-0.25px;">Test User</div>
<div class="t" style="right:294px;top:497.50px;font-size:14px;color:#444;font-weight:400;letter-spacing:-0.05px">Notes:</div>
<div style="position:absolute;left:1043px;top:479px;width:227px;height:50px;border:1px solid #c8c6c4;box-sizing:border-box;background:#fff"></div>
<div class="t" style="left:1048px;top:485.00px;font-size:12px;color:#333;font-weight:400;letter-spacing:-0.15px">Primera dosis.</div>
<div style="position:absolute;left:893px;top:555px;width:389px;height:161px;border:1px solid #c8c6c4;box-sizing:border-box;background:#fff"></div>
<div style="position:absolute;left:894px;top:556px;width:387px;height:23px;background:#fafafa;box-shadow:inset 0 0 0 1px #fff"></div>
<div style="position:absolute;left:894px;top:579px;width:387px;height:1px;background:#c8c6c4"></div>
<div class="t" style="left:905.5px;top:561.00px;font-size:14px;color:#444;font-weight:400;letter-spacing:-0.25px;">More Information</div>
<div class="t" style="right:294px;top:602.50px;font-size:14px;color:#444;font-weight:400;letter-spacing:-0.05px">Information Source:</div>
<div style="position:absolute;left:1043px;top:596px;width:185px;height:25px;border:1px solid #c8c6c4;box-sizing:border-box;background:#fff"></div>
<div class="t" style="left:1049px;width:147px;overflow:hidden;top:602.50px;font-size:14px;color:#333;font-weight:400;letter-spacing:-0.25px;">New immunization recc</div>
<svg style="position:absolute;left:1200px;top:607px" width="8" height="4"><polygon points="0,0 8,0 4.0,4" fill="#333"/></svg>
<svg style="position:absolute;left:1215px;top:605px" width="8" height="8"><g stroke="#333" stroke-width="1.4"><line x1="0.5" y1="0.5" x2="7.5" y2="7.5"/><line x1="7.5" y1="0.5" x2="0.5" y2="7.5"/></g></svg>
<div class="t" style="right:294px;top:641.50px;font-size:14px;color:#444;font-weight:400;letter-spacing:-0.05px">Administration Status:</div>
<div style="position:absolute;left:1043px;top:635px;width:185px;height:25px;border:1px solid #c8c6c4;box-sizing:border-box;background:#fff"></div>
<div class="t" style="left:1049px;top:641.50px;font-size:14px;color:#333;font-weight:400;letter-spacing:-0.25px;">Administered</div>
<svg style="position:absolute;left:1214px;top:646px" width="8" height="4"><polygon points="0,0 8,0 4.0,4" fill="#333"/></svg>
<div class="t" style="right:294px;top:680.50px;font-size:14px;color:#444;font-weight:400;letter-spacing:-0.05px">VFC Eligibility Status:</div>
<div style="position:absolute;left:1043px;top:674px;width:185px;height:25px;border:1px solid #c8c6c4;box-sizing:border-box;background:#fff"></div>
<div class="t" style="left:1049px;top:680.50px;font-size:14px;color:#333;font-weight:400;letter-spacing:-0.25px;">Not VFC eligible</div>
<svg style="position:absolute;left:1214px;top:685px" width="8" height="4"><polygon points="0,0 8,0 4.0,4" fill="#333"/></svg>
</body></html>
